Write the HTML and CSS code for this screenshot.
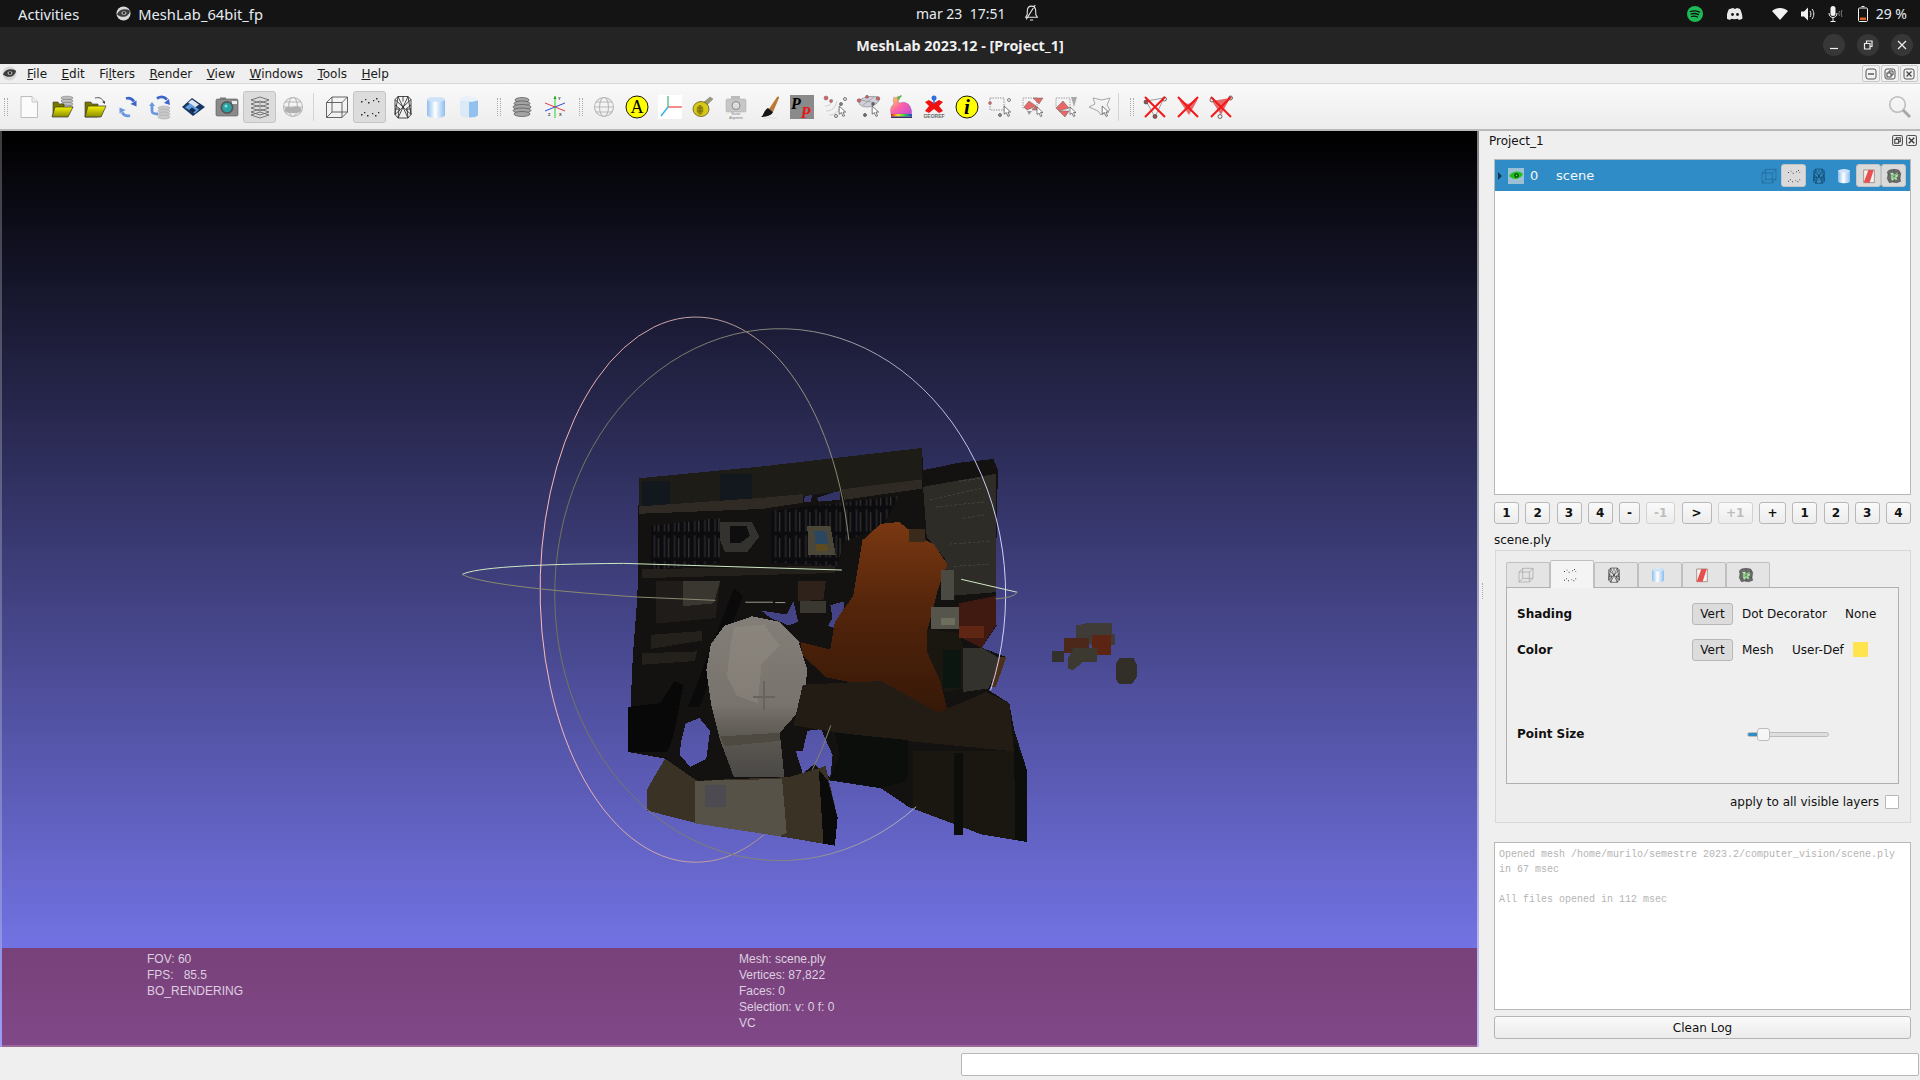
FILE: index.html
```html
<!DOCTYPE html>
<html lang="en">
<head>
<meta charset="utf-8">
<title>MeshLab 2023.12 - [Project_1]</title>
<link rel="stylesheet" href="styles.css">
</head>
<body>
<svg class="defs" aria-hidden="true">
  <defs>
    <linearGradient id="gFolder" x1="0" y1="0" x2="0" y2="1"><stop offset="0" stop-color="#f4f400"/><stop offset="1" stop-color="#8a8a00"/></linearGradient>
    <linearGradient id="gSmooth" x1="0" y1="0" x2="1" y2="0"><stop offset="0" stop-color="#8dbdee"/><stop offset=".45" stop-color="#fff"/><stop offset="1" stop-color="#8dbdee"/></linearGradient>
    <linearGradient id="gBunny" x1="0" y1="0" x2="1" y2="1"><stop offset="0" stop-color="#ffe23a"/><stop offset=".5" stop-color="#ff62a8"/><stop offset="1" stop-color="#c04ad8"/></linearGradient>
    <linearGradient id="gRain" x1="0" y1="0" x2="1" y2="0"><stop offset="0" stop-color="#e0201c"/><stop offset=".33" stop-color="#f0e020"/><stop offset=".66" stop-color="#20d040"/><stop offset="1" stop-color="#2040e0"/></linearGradient>
    <symbol id="i-cube" viewBox="0 0 24 24"><path d="M1.500 7.500h15.500v15h-15.500zM1.500 7.500l5.500-5.500h15.500v15l-5.500 5.500M17 7.500l5.500-5.500M7 2v15h15.500M1.500 22.500l5.500-5.500" fill="none" stroke="currentColor" stroke-width=".9"/></symbol>
    <symbol id="i-points" viewBox="0 0 24 24"><path d="M3 6h1.500v1.500h-1.500zM7 4h1.300v1.300h-1.300zM10 7h1.500v1.500h-1.500zM15 5h1.300v1.300h-1.300zM18 3h1.500v1.500h-1.500zM20 6h1.300v1.300h-1.300zM3 19h1.500v1.500h-1.500zM6 17h1.300v1.300h-1.300zM9 20h1.500v1.500h-1.500zM14 18h1.300v1.300h-1.300zM17 20h1.500v1.500h-1.500zM20 17h1.300v1.300h-1.300z" fill="currentColor"/></symbol>
    <symbol id="i-wire" viewBox="0 0 24 24"><path d="M7 1.500h10l3 3v15l-3 3.500h-10l-3-3.500v-15zM7 1.500l-3 18M17 1.500l3 18M7 1.500l10 21.500M17 1.500l-10 21.500M4 4.500l16 15M20 4.500l-16 15M12 1.500v5M4 10l5 4M20 10l-5 4M7 23l1-9M17 23l-1-9M4 14h5M20 14h-5" fill="none" stroke="currentColor" stroke-width=".85"/></symbol>
    <symbol id="i-smooth" viewBox="0 0 24 24"><path d="M3 5c0-4 18-4 18 0v15c0 4-18 4-18 0z" fill="url(#gSmooth)"/><ellipse cx="12" cy="4.500" rx="9" ry="2.300" fill="#cfe3f8"/></symbol>
    <symbol id="i-flat" viewBox="0 0 24 24"><path d="M3 5c0-3 6-3.500 9-3.500v21c-3 0-9-.5-9-3z" fill="#dce9f7"/><path d="M12 6.500c4 0 9-.7 9-1.500v15c0 1.700-5 2.500-9 2.500z" fill="#93c1ee"/><path d="M12 1.500c4 0 9 1 9 3.500-2 1-5 1.500-9 1.500-3 0-6-.5-9-1.500 0-2.500 5-3.500 9-3.500z" fill="#e9f2fb"/></symbol>
    <symbol id="i-texred" viewBox="0 0 24 24"><path d="M4 3h16v19h-16z" fill="#f4f4f4" stroke="#8a6a5a" stroke-width="1"/><path d="M11 3h8l-6 19h-9z" fill="#e85050"/></symbol>
    <symbol id="i-mesh" viewBox="0 0 24 24"><path d="M5 3l7-1 7 1 3 5-1 8 1 4-6 2-6-1-5 1-3-6 1-6-1-4z" fill="#6c6c6c" stroke="#333" stroke-width=".7"/><path d="M6 8l5-1 2 3 4-3 1 5-2 3 1 3-5-1-2 2-3-3 1-4z" fill="#a6e6a0"/><path d="M3 8l18 9M21 6l-17 12M12 2v20" stroke="#3a3a3a" stroke-width=".5" fill="none"/></symbol>
    <symbol id="i-stack" viewBox="0 0 24 24"><g fill="none" stroke="#6c6c6c" stroke-width=".9"><path d="M3 5l9-3 9 3-9 3z"/><path d="M3 9l9-3 9 3-9 3z"/><path d="M3 13l9-3 9 3-9 3z"/><path d="M3 17l9-3 9 3-9 3z"/><path d="M3 20l9-3 9 3-9 3z"/></g></symbol>
    <symbol id="i-cursor" viewBox="0 0 24 24"><path d="M4 2v15l4-3 3 7 3-1-3-7h5z" fill="#fff" stroke="#444" stroke-width="1.300"/></symbol>
    <symbol id="i-globe" viewBox="0 0 24 24"><g fill="none" stroke="#b8b8b8" stroke-width="1.100"><circle cx="12" cy="12" r="9.500"/><ellipse cx="12" cy="12" rx="4.500" ry="9.500"/><path d="M2.500 12h19M4 7h16M4 17h16"/></g></symbol>
    <symbol id="i-x" viewBox="0 0 24 24"><path d="M2 2l20 20M22 2l-20 20" stroke="#f01818" stroke-width="2" fill="none"/></symbol>
    <symbol id="i-logo" viewBox="0 0 16 16"><circle cx="8" cy="8" r="7.500" fill="#d8d8d8"/><path d="M1 9c2-5 8-7 14-4-1 6-8 9-14 4z" fill="#3c3c3c"/><ellipse cx="8.500" cy="7.500" rx="2.800" ry="2" fill="#a8a8a8"/><circle cx="8.500" cy="7.500" r="1.100" fill="#111"/></symbol>
  </defs>
</svg>

<header class="sysbar">
  <span class="activities">Activities</span>
  <span class="app"><svg class="applogo"><use href="#i-logo"/></svg>MeshLab_64bit_fp</span>
  <span class="clock">mar 23&nbsp; 17:51</span>
  <svg class="bell" viewBox="0 0 16 16"><path d="M8 2c-3 0-4 2-4 5v3l-1.500 2.500h11l-1.500-2.500v-3c0-3-1-5-4-5zM6.500 15h3M3 14.500l8.500-13.500" fill="none" stroke="#e6e6e6" stroke-width="1"/></svg>
  <div class="tray">
    <svg class="t-spot" viewBox="0 0 16 16"><circle cx="8" cy="8" r="8" fill="#1db954"/><path d="M3.500 5.500c3-1 6-.8 9 .7M4 8c2.500-.8 5-.6 7.500.6M4.500 10.500c2-.6 4-.5 6 .5" fill="none" stroke="#111" stroke-width="1.300" stroke-linecap="round"/></svg>
    <svg class="t-disc" viewBox="0 0 16 12"><path d="M3 1c1.500-.7 3-1 3.500-1l.4.800h2.200l.4-.8c.5 0 2 .3 3.500 1 1.500 2.500 2.500 6 2.400 9.500-1.300 1-2.700 1.400-3.600 1.500l-.9-1.300c-2.300.6-4.500.6-6.800 0l-.9 1.300c-.9-.1-2.300-.5-3.600-1.500-.1-3.500.9-7 2.400-9.500z" fill="#e8e8e8"/><circle cx="5.500" cy="6.500" r="1.400" fill="#141414"/><circle cx="10.500" cy="6.500" r="1.400" fill="#141414"/></svg>
    <svg class="t-wifi" viewBox="0 0 16 12"><path d="M0 3c4.500-4 11.500-4 16 0l-8 9z" fill="#f2f2f2"/></svg>
    <svg class="t-vol" viewBox="0 0 16 16"><path d="M1 5.500h3l4-4v13l-4-4h-3z" fill="#f2f2f2"/><path d="M10 5c1.200 1.800 1.200 4.200 0 6M12 3c2.400 3 2.400 7 0 10" fill="none" stroke="#f2f2f2" stroke-width="1"/></svg>
    <svg class="t-mic" viewBox="0 0 16 16"><rect x="3.500" y="0" width="5" height="10" rx="2.500" fill="#f2f2f2"/><path d="M2 7c0 6 8 6 8 0M6 12v3M3.500 15.500h5" fill="none" stroke="#f2f2f2" stroke-width="1"/><path d="M12.500 5c-.8 1.800-.8 3.200 0 5M15 4c-1 2.500-1 4.500 0 7" fill="none" stroke="#9a9a9a" stroke-width=".8"/></svg>
    <svg class="t-bat" viewBox="0 0 10 16"><path d="M3.500.5h3M1.500 2h7c.6 0 1 .4 1 1v11.500c0 .6-.4 1-1 1h-7c-.6 0-1-.4-1-1v-11.500c0-.6.4-1 1-1z" fill="none" stroke="#f2f2f2" stroke-width="1"/><rect x="2" y="11.500" width="6" height="2.500" fill="#e8641e"/></svg>
    <span class="batt">29 %</span>
  </div>
</header>

<div class="titlebar">
  <span class="wintitle">MeshLab 2023.12 - [Project_1]</span>
  <div class="winctl">
    <span class="wbtn"><svg viewBox="0 0 12 12"><path d="M2 9.500h8" stroke="#eee" stroke-width="1.200"/></svg></span>
    <span class="wbtn"><svg viewBox="0 0 12 12"><path d="M2.500 4.500h5.500v5.500h-5.500zM4.500 4.500v-2.500h5.500v5.500h-2" fill="none" stroke="#eee" stroke-width="1.200"/></svg></span>
    <span class="wbtn"><svg viewBox="0 0 12 12"><path d="M2 2l8 8M10 2l-8 8" stroke="#eee" stroke-width="1.200"/></svg></span>
  </div>
</div>

<nav class="menubar">
  <svg class="menulogo"><use href="#i-logo"/></svg>
  <span class="mi"><u>F</u>ile</span>
  <span class="mi"><u>E</u>dit</span>
  <span class="mi">Fi<u>l</u>ters</span>
  <span class="mi"><u>R</u>ender</span>
  <span class="mi"><u>V</u>iew</span>
  <span class="mi"><u>W</u>indows</span>
  <span class="mi"><u>T</u>ools</span>
  <span class="mi"><u>H</u>elp</span>
  <div class="mdi">
    <span class="mdib"><svg viewBox="0 0 12 12"><rect x="1" y="1" width="10" height="10" rx="2" fill="none" stroke="#555"/><path d="M3 6h6" stroke="#444" stroke-width="1.300"/></svg></span>
    <span class="mdib"><svg viewBox="0 0 12 12"><rect x="1" y="1" width="10" height="10" rx="2" fill="none" stroke="#555"/><rect x="3" y="5" width="4" height="4" fill="none" stroke="#444"/><path d="M5 5v-2h4v4h-2" fill="none" stroke="#444"/></svg></span>
    <span class="mdib"><svg viewBox="0 0 12 12"><rect x="1" y="1" width="10" height="10" rx="2" fill="none" stroke="#555"/><path d="M3.500 3.500l5 5M8.500 3.500l-5 5" stroke="#444" stroke-width="1.300"/></svg></span>
  </div>
</nav>

<div class="toolbar">
  <span class="handle h1"></span>
  <div class="tgroup">
    <span class="tb"><svg viewBox="0 0 24 24"><path d="M4 1.500h11l5.500 5.500v15.500h-16.500z" fill="#fbfbfb" stroke="#bdbdbd"/><path d="M15 1.500v5.500h5.500" fill="#eee" stroke="#c8c8c8"/></svg></span>
    <span class="tb"><svg viewBox="0 0 24 24"><g fill="#c0c0c0" stroke="#666" stroke-width=".5"><ellipse cx="17" cy="3" rx="6" ry="1.800"/><ellipse cx="17" cy="6" rx="6" ry="1.800"/><ellipse cx="17" cy="9" rx="6" ry="1.800"/><ellipse cx="17" cy="12" rx="6" ry="1.800"/></g><path d="M3 7h5l1 2h5v12h-11z" fill="#777700" stroke="#333" stroke-width=".6"/><path d="M5 12h18l-5 10h-16z" fill="url(#gFolder)" stroke="#333" stroke-width=".7"/></svg></span>
    <span class="tb"><svg viewBox="0 0 24 24"><path d="M2 7h6l1 2h6v13h-13z" fill="#777700" stroke="#333" stroke-width=".6"/><path d="M5 11h18l-5 11h-16z" fill="url(#gFolder)" stroke="#333" stroke-width=".7"/><path d="M12 3c4-1 7 0 9 4" fill="none" stroke="#444" stroke-width=".9"/><path d="M22 9l-3-2 3-1z" fill="#444"/></svg></span>
    <span class="tb"><svg viewBox="0 0 24 24"><path d="M10 3.500c3-1 6 0 8 3" fill="none" stroke="#3a66cc" stroke-width="2.800"/><path d="M20.500 11.500l-6-2.500 6-3.500z" fill="#3a66cc"/><path d="M14 20.500c-3 1-6 0-8-3" fill="none" stroke="#6a98e0" stroke-width="2.800"/><path d="M3.500 12.500l6 2.500-6 3.500z" fill="#6a98e0"/></svg></span>
    <span class="tb"><svg viewBox="0 0 24 24"><g fill="#cacaca" stroke="#989898" stroke-width=".4"><ellipse cx="15" cy="13" rx="6" ry="2"/><ellipse cx="15" cy="16" rx="6" ry="2"/><ellipse cx="15" cy="19" rx="6" ry="2"/><ellipse cx="15" cy="22" rx="6" ry="2"/></g><path d="M8 3.500c3-2 7-2 10 1" fill="none" stroke="#3a66cc" stroke-width="2.800"/><path d="M21 10l-6-2 5-4z" fill="#3a66cc"/><path d="M3 10v6c0 2 3 3 6 3" fill="none" stroke="#6a98e0" stroke-width="2.800"/><path d="M0 11l6 0-3-4z" fill="#6a98e0"/></svg></span>
    <span class="tb"><svg viewBox="0 0 24 24"><path d="M0 12l10-9 13 9-12 9z" fill="#17365f"/><path d="M10 4.500l7 5-4 3-7-5z" fill="#dbe6f2"/><path d="M3 12.500l5-4 9 6-4 4z" fill="#5f9de0"/><path d="M7 15l3-2.500 4 2.700-3 2.500z" fill="#112a4c"/></svg></span>
    <span class="tb"><svg viewBox="0 0 24 24"><rect x="1" y="4" width="22" height="17" rx="1.500" fill="#8b8b8b" stroke="#555" stroke-width=".6"/><rect x="17" y="6" width="5" height="3" fill="#eee"/><rect x="5" y="2.500" width="6" height="2" fill="#777"/><circle cx="12" cy="12.500" r="6.500" fill="#555"/><circle cx="12" cy="12.500" r="4.800" fill="#2ba3a3"/><circle cx="11" cy="11" r="1.500" fill="#8adcdc"/></svg></span>
    <span class="tb tb-on"><svg><use href="#i-stack"/></svg></span>
    <span class="tb"><svg viewBox="0 0 24 24"><use href="#i-globe" width="24" height="24"/><path d="M4 13c3-2 5 0 8-1s5-1 8 1v3c-4 3-12 3-16 0z" fill="#b0b0b0"/></svg></span>
  </div>
  <span class="tsep s1"></span>
  <div class="tgroup g2">
    <span class="tb ink"><svg><use href="#i-cube"/></svg></span>
    <span class="tb tb-on ink2"><svg><use href="#i-points"/></svg></span>
    <span class="tb ink2"><svg><use href="#i-wire"/></svg></span>
    <span class="tb"><svg><use href="#i-smooth"/></svg></span>
    <span class="tb"><svg><use href="#i-flat"/></svg></span>
  </div>
  <span class="handle h2"></span>
  <div class="tgroup g3">
    <span class="tb"><svg viewBox="0 0 24 24"><g fill="#a4a4a4" stroke="#555" stroke-width=".7"><ellipse cx="12" cy="5" rx="7" ry="2.500"/><ellipse cx="12" cy="8.500" rx="8" ry="2.500"/><ellipse cx="12" cy="12" rx="9" ry="2.500"/><ellipse cx="12" cy="15.500" rx="9" ry="2.500"/><ellipse cx="12" cy="19" rx="8" ry="2.500"/></g></svg></span>
    <span class="tb"><svg viewBox="0 0 24 24"><path d="M12 1v22" stroke="#8de08d" stroke-width="2"/><path d="M12 1l-1.500 3h3z" fill="#20a020"/><path d="M2 16l20-8" stroke="#3050e0" stroke-width="1"/><path d="M2 8l20 8" stroke="#e04040" stroke-width="1"/><text class="axt" x="15" y="5">Y</text><text class="axt" x="5" y="21">Z</text><text class="axt" x="16" y="21">X</text></svg></span>
  </div>
  <span class="handle h3"></span>
  <div class="tgroup g4">
    <span class="tb"><svg><use href="#i-globe"/></svg></span>
    <span class="tb"><svg viewBox="0 0 24 24"><circle cx="12" cy="12" r="11" fill="#ffff00" stroke="#000" stroke-width=".9"/><text class="letter" x="12" y="18">A</text></svg></span>
    <span class="tb"><svg viewBox="0 0 24 24"><rect width="24" height="24" fill="#fff"/><path d="M10 12V1" stroke="#38b878" stroke-width="1.200"/><path d="M10 12h14" stroke="#f08080" stroke-width="1.800"/><path d="M10 12l-7 9" stroke="#38b0e8" stroke-width="1.500"/></svg></span>
    <span class="tb"><svg viewBox="0 0 24 24"><path d="M13 7l6-5 3 2-6 6z" fill="#9a9a78" stroke="#666" stroke-width=".4"/><ellipse cx="10" cy="14" rx="8" ry="7.500" fill="#d8c818" stroke="#4c4a10" stroke-width=".7"/><ellipse cx="9" cy="15" rx="3.500" ry="5" fill="#a8980c"/><path d="M9 10v9M6 13h6M6 16h6" stroke="#4c4a10" stroke-width=".5"/></svg></span>
    <span class="tb"><svg viewBox="0 0 24 24"><rect x="2" y="4" width="20" height="13" rx="1.500" fill="#c6c6c6" stroke="#aaa" stroke-width=".5"/><rect x="7" y="1" width="9" height="3" fill="#bbb"/><circle cx="12" cy="10.500" r="4" fill="#ddd" stroke="#888"/><text class="tiny" x="12" y="20">Raster</text><text class="tiny" x="12" y="23.500">Alignment</text></svg></span>
    <span class="tb"><svg viewBox="0 0 24 24"><path d="M12 14L20 2c1-1 2.500-.5 2 1l-6 14z" fill="#b87838"/><path d="M11 13l5 4c-1 3-6 5-12 5 3-2 3-7 7-9z" fill="#151515"/><path d="M6 23h14" stroke="#ddd" stroke-width="1"/></svg></span>
    <span class="tb"><svg viewBox="0 0 24 24"><rect width="24" height="24" fill="#8a8a8a"/><text class="pp" x="1" y="14">P<tspan class="pp2" dy="9">P</tspan></text></svg></span>
    <span class="tb"><svg viewBox="0 0 24 24"><path d="M6 20c6 0 10-3 12-12M3 16c6 0 9-3 11-10M2 11c4 0 7-2 8-7" fill="none" stroke="#c8c8c8" stroke-width=".9"/><circle cx="3" cy="3" r="2" fill="#e06060" stroke="#666" stroke-width=".5"/><circle cx="8" cy="6" r="1.500" fill="#e06060" stroke="#666" stroke-width=".5"/><circle cx="22" cy="4" r="1.500" fill="#eee" stroke="#555" stroke-width=".8"/><circle cx="13" cy="21" r="1.500" fill="#eee" stroke="#555" stroke-width=".8"/><circle cx="18" cy="9" r="1.500" fill="#888" stroke="#444" stroke-width=".6"/><use href="#i-cursor" x="14" y="10" width="13" height="13"/></svg></span>
    <span class="tb"><svg viewBox="0 0 24 24"><path d="M3 7c0-4 12-7 19-5 3 2 0 7-6 9-5 2-13 1-13-4z" fill="#d0d0dc" stroke="#8a8a8a" stroke-width=".7"/><path d="M5 5l15 3M7 10l11-8" stroke="#777" stroke-width=".5"/><circle cx="3" cy="5.500" r="1.800" fill="#e06060" stroke="#555" stroke-width=".5"/><circle cx="11" cy="1.800" r="1.500" fill="#e06060" stroke="#555" stroke-width=".5"/><circle cx="22" cy="3.500" r="1.800" fill="#e06060" stroke="#555" stroke-width=".5"/><circle cx="9" cy="20" r="1.500" fill="#777" stroke="#333" stroke-width=".6"/><circle cx="17" cy="9" r="1.300" fill="#777" stroke="#333" stroke-width=".6"/><use href="#i-cursor" x="14" y="10" width="13" height="13"/></svg></span>
    <span class="tb"><svg viewBox="0 0 24 24"><path d="M8 2c3-2 3 1 2 3l-1 2c1 0 1 1 2 1 5-2 10 1 11 6 1 2 1 4 0 5h-20c-1-5 0-8 3-10-1-2-1-5 0-7 1 1 2 1 3 0z" fill="url(#gBunny)" stroke="#8a5aa0" stroke-width=".4"/><path d="M8 3l4-3 1 1-4 4z" fill="#40c040"/><rect x="2" y="19" width="21" height="2.500" fill="url(#gRain)"/><rect x="2" y="21.500" width="21" height="1.500" fill="#3a2a6a"/></svg></span>
    <span class="tb"><svg viewBox="0 0 24 24"><path d="M3 7l4-2 5 3 5-3 4 2-4 4 4 5-4 2-5-4-5 4-4-2 4-5z" fill="#f01010"/><circle cx="12" cy="3" r="2.500" fill="#2f6ee0"/><path d="M12 5v4" stroke="#2f6ee0" stroke-width="1.500"/><text class="geo" x="12" y="23">GEOREF</text></svg></span>
    <span class="tb"><svg viewBox="0 0 24 24"><circle cx="12" cy="12" r="11" fill="#ffff00" stroke="#000" stroke-width=".9"/><text class="letter inf" x="12" y="18.500">i</text></svg></span>
    <span class="tb"><svg viewBox="0 0 24 24"><path d="M2 3h14v12h-14z" fill="none" stroke="#999" stroke-width="1" stroke-dasharray="1.500 1"/><circle cx="2" cy="8" r="1.500" fill="#e06060" stroke="#777" stroke-width=".5"/><circle cx="21" cy="5" r="1.500" fill="#eee" stroke="#666" stroke-width=".8"/><circle cx="12" cy="20" r="1.500" fill="#999" stroke="#555" stroke-width=".8"/><use href="#i-cursor" x="14" y="10" width="13" height="13"/></svg></span>
    <span class="tb"><svg viewBox="0 0 24 24"><path d="M2 3h14v10h-14z" fill="none" stroke="#999" stroke-width=".9" stroke-dasharray="1.500 1"/><path d="M12 3h10l-4 6-4-4zM8 6l7 5-9 4-3-3zM15 11l3 4-7 0z" fill="#e86868" stroke="#666" stroke-width=".5"/><path d="M6 16l5 0-3 4z" fill="#9a9a9a"/><use href="#i-cursor" x="14" y="11" width="12" height="12"/></svg></span>
    <span class="tb"><svg viewBox="0 0 24 24"><path d="M2 3h14v10h-14z" fill="none" stroke="#999" stroke-width=".9" stroke-dasharray="1.500 1"/><path d="M17 2h6l-3 10z" fill="#a8a8a8"/><path d="M9 6l6 7-10 3-3-3zM5 16h10l-4 6z" fill="#e86868" stroke="#666" stroke-width=".5"/><use href="#i-cursor" x="14" y="11" width="12" height="12"/></svg></span>
    <span class="tb"><svg viewBox="0 0 24 24"><path d="M6 3l9 2 8-2-3 7 3 5-9 5-3-4-9-4 6-3z" fill="none" stroke="#a8a8a8" stroke-width="1"/><use href="#i-cursor" x="13" y="10" width="13" height="13"/></svg></span>
  </div>
  <span class="tsep s2"></span>
  <span class="handle h4"></span>
  <div class="tgroup g5">
    <span class="tb"><svg viewBox="0 0 24 24"><path d="M3 6l9 16 9-19z" fill="none" stroke="#888" stroke-width=".8"/><circle cx="3" cy="7" r="2" fill="#a05050" stroke="#333" stroke-width=".6"/><circle cx="21.500" cy="4" r="2" fill="#eee" stroke="#333" stroke-width=".7"/><circle cx="12" cy="21.500" r="2" fill="#a05050" stroke="#333" stroke-width=".6"/><use href="#i-x"/></svg></span>
    <span class="tb"><svg viewBox="0 0 24 24"><path d="M3 5l9 4 10-5-9 16z" fill="#e86868"/><use href="#i-x"/></svg></span>
    <span class="tb"><svg viewBox="0 0 24 24"><path d="M3 6l9 14 9-17z" fill="#e86868"/><circle cx="3" cy="5" r="2" fill="#eee" stroke="#333" stroke-width=".7"/><circle cx="21.500" cy="3" r="2" fill="#eee" stroke="#333" stroke-width=".7"/><circle cx="11" cy="21.500" r="2" fill="#eee" stroke="#333" stroke-width=".7"/><use href="#i-x"/></svg></span>
  </div>
  <svg class="search" viewBox="0 0 24 24"><circle cx="9.500" cy="9.500" r="7.800" fill="none" stroke="#bdbdbd" stroke-width="1.600"/><path d="M15 15l7 7" stroke="#a8a8a8" stroke-width="3"/></svg>
</div>

<main class="workspace">
  <section class="viewport">
    <svg class="scene" viewBox="0 0 1568 1568" preserveAspectRatio="none">
      <defs>
        <linearGradient id="gCloak" x1="0" y1="0" x2="0" y2="1"><stop offset="0" stop-color="#7a3812"/><stop offset=".45" stop-color="#54250b"/><stop offset="1" stop-color="#361807"/></linearGradient>
        <linearGradient id="gHead" x1="0" y1="0" x2="0" y2="1"><stop offset="0" stop-color="#837e77"/><stop offset=".55" stop-color="#78736c"/><stop offset=".75" stop-color="#5c5852"/><stop offset="1" stop-color="#4a4846"/></linearGradient>
        <linearGradient id="gRingL" gradientUnits="userSpaceOnUse" x1="218" y1="0" x2="895" y2="0"><stop offset="0" stop-color="#ffb8b8"/><stop offset=".5" stop-color="#bfa0a0"/><stop offset="1" stop-color="#86866e"/></linearGradient>
        <linearGradient id="gRingB" gradientUnits="userSpaceOnUse" x1="250" y1="0" x2="1232" y2="0"><stop offset="0" stop-color="#73735a"/><stop offset=".5" stop-color="#84847a"/><stop offset="1" stop-color="#d0d0ff"/></linearGradient>
        <pattern id="pBooks" width="22" height="70" patternUnits="userSpaceOnUse"><rect width="22" height="70" fill="#0c0c0e"/><rect x="3" y="6" width="4" height="60" fill="#23232a"/><rect x="12" y="14" width="3" height="52" fill="#34322f"/></pattern>
      </defs>
      <g class="mesh">
        <path fill-rule="evenodd" fill="#141210" d="M433 482L700 450 1050 400 1052 460 1130 440 1205 430 1215 460 1210 760 1212 880 1180 940 1232 965 1195 1055 1240 1090 1250 1160 1278 1270 1278 1465 1180 1445 1020 1370 960 1320 845 1298 866 1400 860 1475 740 1450 560 1415 450 1380 452 1320 490 1240 410 1222 415 1100 420 960 430 800Z
        M525 1195L535 1145 565 1130 588 1165 580 1240 545 1262 522 1230Z
        M790 1220L800 1165 830 1160 855 1230 850 1290 815 1255 790 1280 775 1220Z
        M795 530L810 525 808 545 792 545Z M820 535L870 515 872 540 825 545Z
        M700 840L755 850 770 815 780 870 760 880 720 860Z
        M850 825L880 815 875 895 845 880 855 860Z
        M782 925L845 945 825 950 795 940Z"/>
        <path fill="#1e1c16" d="M433 482L700 450 1050 400 1050 490 820 525 700 552 433 560Z"/>
        <path fill="#13181f" d="M440 490h60v68h-60zM610 470h70v75h-70z"/>
        <path fill="#2f2b24" d="M433 558L700 535 790 525 790 548 700 565 433 578Z"/>
        <path fill="#2f2b24" d="M875 512L1050 485 1050 510 880 540Z"/>
        <path fill="url(#pBooks)" d="M460 610L610 590V710L460 730Z"/>
        <path fill="url(#pBooks)" d="M720 570L1000 530 960 620 880 650 865 720 720 710Z"/>
        <path fill="#34322e" d="M610 600h70l15 40-25 40h-50l-10-30z"/>
        <path fill="#0e0e0f" d="M632 610h35l8 28-20 18h-23z"/>
        <path fill="#4a4638" d="M800 610h50l12 80h-60z"/>
        <path fill="#2a4660" d="M815 625h25l6 35h-28z"/>
        <path fill="#5c4a20" d="M818 660h24l4 18h-26z"/>
        <path fill="#24211c" d="M440 728L860 718 860 738 440 752Z"/>
        <path fill="#1f1c19" d="M470 760h140l-10 100-130 15z"/>
        <path fill="#3a3630" d="M530 760h80l-14 60-66 8z"/>
        <path fill="#2e221a" d="M780 760h60l-5 50-55 5z"/>
        <path fill="#3a3830" d="M785 815h55v30h-55z"/>
        <path fill="#24211c" d="M460 905l110-10 0 26-110 22zM440 955l120-5-5 26-115 10z"/>
        <path fill="#0a0a0a" d="M640 780L540 1100 565 1100 660 800z"/>
        <path fill="#2e2c27" d="M1052 505L1210 470 1210 790 1110 800 1100 700 1060 640Z"/>
        <path fill="none" stroke="#46443c" stroke-width="2" stroke-dasharray="6 4" d="M1068 540l110-30M1080 560l110-15M1140 590l50-10M1110 660l90-8M1120 720l80-6M1130 490l50-8"/>
        <path fill="url(#gCloak)" d="M960 605L1000 600 1040 640 1075 660 1105 715 1085 780 1060 900 1080 980 1105 1110 1085 1115 970 1080 920 1040 840 1020 790 960 785 925 850 945 860 870 900 800 920 650Z"/>
        <path fill="#3a2a1c" d="M1022 618h35v35h-35z"/>
        <path fill="#4a4a42" d="M1090 730h30v80h-30z"/><path fill="#56554c" d="M1070 830h60v60h-60z"/><path fill="#6e6e5c" d="M1092 860h30v18h-30z"/>
        <path fill="#1a1610" d="M1060 890l70 10 10 40 0 110-40 10-40-110z"/>
        <path fill="#0c1610" d="M1095 945h40v105h-40z"/>
        <path fill="#401a10" d="M1130 820l80-20 0 80-30 60-50-30z"/>
        <path fill="#602614" d="M1130 880h55v35h-55z"/>
        <path fill="#34322c" d="M1140 940l40 0 40 30-25 80-55 10z"/>
        <path fill="#4c3018" d="M1215 965h18l-22 80h-12z"/>
        <path fill="url(#gHead)" d="M620 880L680 855 740 870 780 920 800 1000 790 1100 740 1170 750 1290 640 1290 610 1190 590 1090 580 1000 590 930Z"/>
        <path fill="#a09a90" d="M640 885l65-8 35 58-40 50-8 105-45-20-22-55 8-85z" opacity=".28"/>
        <path fill="#68635c" d="M703 1030h5v40h22v6h-22v34h-5v-34h-22v-6h22z"/>
        <path fill="#4e4a42" d="M610 1180l130-10 0 22-120 14z"/>
        <path fill="#3a3225" d="M452 1320L490 1240 560 1300 640 1295 760 1290 840 1260 866 1400 860 1475 740 1450 560 1415 450 1380Z"/>
        <path fill="#565248" d="M555 1300L745 1295 755 1440 740 1450 555 1415Z"/>
        <path fill="#47465a" d="M578 1310h45v60h-45z" opacity=".55"/>
        <path fill="#221c14" d="M790 1040L960 1030 1085 1115 1190 1060 1240 1090 1250 1220 1040 1195 870 1170 770 1150Z"/>
        <path fill="#1a1710" d="M1030 1220L1250 1220 1278 1270 1278 1465 1180 1445 1030 1375Z"/>
        <path fill="#0c0e0c" d="M860 1170L1020 1190 1018 1300 960 1320 850 1295 870 1230ZM1120 1225h20v220h-20zM1250 1190l28 80 0 195-25-5z"/>
        <path fill="#0a0a0a" d="M825 1270l20 30 21 100-6 75-25-5z"/>
        <path fill="#080808" d="M410 1100l70-10 30-60 20 10-15 100-10 50-10 32-85 0z"/>
        <path fill="#33312c" d="M1332 950h26v28h-26z"/>
        <path fill="#3f3b36" d="M1385 880l30-8h48v30h8v30h-50l-36-10z"/>
        <path fill="#4c281a" d="M1358 915h55v40h-55z"/>
        <path fill="#5c2412" d="M1420 905h42v55h-42z"/>
        <path fill="#3c3a30" d="M1380 940l50 0 0 38-30 0-20 22-12-2 0-30z"/>
        <path fill="#322f28" d="M1472 985l8-18h30l8 20v30l-10 20h-30l-6-12z"/>
      </g>
      <g class="rings">
        <path stroke="url(#gRingL)" d="M890.400 650A339 737 0 1 0 706 1445"/>
        <path stroke="#84846c" d="M851 1150A339 737 0 0 1 811 1270"/>
        <path stroke="url(#gRingB)" d="M1199 1055A491 719 0 1 0 1037 1370"/>
        <path stroke="#cfe8c4" d="M48 742Q90 715 400 712L875 730"/>
        <path stroke="#cfe8c4" d="M1135 755L1257 790"/>
        <path stroke="#8a8a70" d="M48 742Q100 775 430 803L600 812"/>
        <path stroke="#8a8a70" d="M1257 790Q1250 805 1210 808"/>
        <path stroke="#9a9a88" d="M665 817h60M730 818h22"/>
      </g>
    </svg>
    <div class="overlay">
      <div class="ovcol ov1"><span>FOV: 60</span><span>FPS:&nbsp;&nbsp;&nbsp;85.5</span><span>BO_RENDERING</span></div>
      <div class="ovcol"><span>Mesh: scene.ply</span><span>Vertices: 87,822</span><span>Faces: 0</span><span>Selection: v: 0 f: 0</span><span>VC</span></div>
    </div>
  </section>

  <aside class="dock">
    <span class="splitter"></span>
    <div class="dockhead">
      <span>Project_1</span>
      <span class="dockbtns">
        <svg viewBox="0 0 10 10"><rect x=".5" y=".5" width="9" height="9" rx="1.500" fill="none" stroke="#555"/><rect x="2.500" y="4" width="3.500" height="3.500" fill="none" stroke="#444"/><path d="M4 4v-1.500h3.500v3.500h-1.500" fill="none" stroke="#444"/></svg>
        <svg viewBox="0 0 10 10"><rect x=".5" y=".5" width="9" height="9" rx="1.500" fill="none" stroke="#555"/><path d="M2.500 2.500l5 5M7.500 2.500l-5 5" stroke="#333" stroke-width="1.200"/></svg>
      </span>
    </div>
    <div class="tree">
      <div class="treerow">
        <span class="arrow"></span>
        <span class="eye"><svg viewBox="0 0 16 16"><rect width="16" height="16" fill="#9cc0d4"/><path d="M1 8c3-5 10-6 14-2-2 5-9 7-14 2z" fill="#20c020"/><circle cx="8.500" cy="7.500" r="2.300" fill="#0c3a10"/><circle cx="8.500" cy="7.500" r="1" fill="#50e050"/></svg></span>
        <span class="rownum">0</span>
        <span class="rowname">scene</span>
        <div class="rowicons">
          <span class="ri ink3"><svg><use href="#i-cube"/></svg></span>
          <span class="ri ri-on ink4"><svg><use href="#i-points"/></svg></span>
          <span class="ri ink5"><svg><use href="#i-wire"/></svg></span>
          <span class="ri"><svg><use href="#i-smooth"/></svg></span>
          <span class="ri ri-on"><svg><use href="#i-texred"/></svg></span>
          <span class="ri ri-on"><svg><use href="#i-mesh"/></svg></span>
        </div>
      </div>
    </div>
    <div class="btnrow">
      <span class="qb w25">1</span><span class="qb w25">2</span><span class="qb w25">3</span><span class="qb w25">4</span>
      <span class="qb w21">-</span><span class="qb w29 off">-1</span><span class="qb w30">&gt;</span><span class="qb w35 off">+1</span><span class="qb w27">+</span>
      <span class="qb w25">1</span><span class="qb w25">2</span><span class="qb w25">3</span><span class="qb w25">4</span>
    </div>
    <div class="meshname">scene.ply</div>
    <div class="group">
      <div class="tabs">
        <span class="tab ink6"><svg><use href="#i-cube"/></svg></span>
        <span class="tab tab-on ink4"><svg><use href="#i-points"/></svg></span>
        <span class="tab ink2"><svg><use href="#i-wire"/></svg></span>
        <span class="tab"><svg><use href="#i-smooth"/></svg></span>
        <span class="tab"><svg><use href="#i-texred"/></svg></span>
        <span class="tab"><svg><use href="#i-mesh"/></svg></span>
      </div>
      <div class="pane">
        <div class="prow">
          <span class="plabel">Shading</span>
          <span class="toggle">Vert</span>
          <span class="opt o-dot">Dot Decorator</span>
          <span class="opt o-none">None</span>
        </div>
        <div class="prow">
          <span class="plabel">Color</span>
          <span class="toggle">Vert</span>
          <span class="opt o-mesh">Mesh</span>
          <span class="opt o-user">User-Def</span>
          <span class="swatch"></span>
        </div>
        <div class="prow prow-size">
          <span class="plabel">Point Size</span>
          <span class="slider"><span class="fill"></span><span class="knob"></span></span>
        </div>
      </div>
      <div class="applyrow"><span>apply to all visible layers</span><span class="check"></span></div>
    </div>
    <div class="log">
      <p>Opened mesh /home/murilo/semestre 2023.2/computer_vision/scene.ply</p>
      <p>in 67 msec</p>
      <p>&nbsp;</p>
      <p>All files opened in 112 msec</p>
    </div>
    <div class="clean">Clean Log</div>
  </aside>
</main>

<footer class="statusbar"><span class="cmdinput"></span></footer>
</body>
</html>
```

FILE: styles.css
```css
* { box-sizing: border-box; }
html, body { margin: 0; padding: 0; }
body {
  width: 1920px; height: 1080px; overflow: hidden;
  display: flex; flex-direction: column;
  background: #efefef; color: #111;
  font-family: "DejaVu Sans", sans-serif; font-size: 12px;
}
.defs { position: absolute; width: 0; height: 0; }
svg { display: block; }

/* system bar */
.sysbar {
  height: 27px; flex: none; display: flex; align-items: center; position: relative;
  background: #141414; color: #e4ecf2;
  font-family: "Noto Sans", sans-serif; font-size: 14px;
}
.activities { margin-left: 18px; font-size: 14.7px; }
.app { display: flex; align-items: center; margin-left: 37px; font-size: 14.7px; }
.applogo { width: 15px; height: 15px; margin-right: 7px; }
.clock { position: absolute; left: 916px; }
.bell { position: absolute; left: 1023px; top: 4px; width: 17px; height: 17px; }
.tray { margin-left: auto; display: flex; align-items: center; padding-right: 13px; }
.t-spot { width: 16px; height: 16px; margin-right: 24px; }
.t-disc { width: 16px; height: 12px; margin-right: 29px; }
.t-wifi { width: 16px; height: 12px; margin-right: 12px; }
.t-vol { width: 16px; height: 16px; margin-right: 11px; }
.t-mic { width: 16px; height: 16px; margin-right: 15px; }
.t-bat { width: 10px; height: 16px; margin-right: 8px; }

/* title bar */
.titlebar {
  height: 37px; flex: none; display: flex; align-items: center; justify-content: center; position: relative;
  background: #242424; color: #f0f0f0;
}
.wintitle { font-family: "Noto Sans", sans-serif; font-weight: 700; font-size: 14.35px; }
.winctl { position: absolute; right: 7px; top: 7px; display: flex; gap: 12px; }
.wbtn { width: 22px; height: 22px; border-radius: 50%; background: #373737; display: flex; align-items: center; justify-content: center; }
.wbtn svg { width: 12px; height: 12px; }

/* menu */
.menubar {
  height: 20px; flex: none; display: flex; align-items: center;
  background: #efefef; border-bottom: 1px solid #d6d6d6;
}
.menulogo { width: 15px; height: 15px; margin-left: 2px; margin-right: 10px; }
.mi { margin-right: 14.4px; line-height: 19px; padding-top: 1px; color: #1a1a1a; }
.mdi { margin-left: auto; margin-right: 2px; display: flex; gap: 1px; }
.mdib { width: 18px; height: 17px; display: flex; align-items: center; justify-content: center; border: 1px solid #c8c8c8; border-radius: 2px; background: #f2f2f2; }
.mdib svg { width: 12px; height: 12px; }

/* toolbar */
.toolbar {
  height: 47px; flex: none; display: flex; align-items: center; padding-top: 1px;
  background: linear-gradient(#f9f9f9, #ededed);
  border-bottom: 2px solid #b9b9b9;
}
.tgroup { display: flex; align-items: center; }
.tb { width: 33px; height: 32px; display: flex; align-items: center; justify-content: center; flex: none; }
.tb svg { width: 24px; height: 24px; overflow: visible; }
.tb-on { background: #dcdcdc; border: 1px solid #c4c4c4; border-radius: 3px; }
.handle { width: 4px; height: 18px; flex: none; border-left: 1px dotted #aaa; border-right: 1px dotted #aaa; }
.h1 { margin-left: 4px; margin-right: 4px; }
.h2 { margin-left: 12px; margin-right: 4px; }
.h3 { margin-left: 8px; margin-right: 4px; }
.h4 { margin-left: 11px; margin-right: 4px; }
.tsep { width: 1px; height: 28px; background: #d4d4d4; flex: none; }
.s1 { margin-left: 4px; margin-right: 6px; }
.s2 { margin-left: 3px; }
.ink { color: #555; }
.ink2 { color: #2a2a2a; }
.ink3 { color: #1c5f8c; }
.ink4 { color: #444; }
.ink5 { color: #0f3a58; }
.ink6 { color: #9a9a9a; }
.axt { font: 700 4px "Liberation Sans", sans-serif; fill: #333; }
.letter { font: 400 18px "Liberation Serif", serif; text-anchor: middle; fill: #000; }
.inf { font-weight: 700; font-style: italic; font-size: 21px; }
.tiny { font: 3px "Liberation Sans", sans-serif; text-anchor: middle; fill: #777; }
.geo { font: 700 5px "Liberation Sans", sans-serif; text-anchor: middle; fill: #666; }
.pp { font: italic 700 16px "Liberation Serif", serif; fill: #000; }
.pp2 { fill: #e81818; }
.search { width: 24px; height: 24px; margin-left: auto; margin-right: 8px; }

/* workspace */
.workspace { flex: 1; min-height: 0; display: flex; }
.viewport {
  width: 1479px; flex: none; position: relative; display: flex; flex-direction: column; justify-content: flex-end;
  background: linear-gradient(#000, #8080ff);
  border-left: 2px solid rgba(240,240,240,.25);
  border-right: 2px solid rgba(240,240,240,.55);
  background-clip: border-box;
}
.scene { position: absolute; left: 438px; top: 169px; width: 720px; height: 580px; }
.mesh path { shape-rendering: crispEdges; }
.rings path { fill: none; stroke-width: 1; vector-effect: non-scaling-stroke; }
.overlay {
  height: 99px; background: rgba(128,16,16,.5); position: relative;
  border-bottom: 2px solid rgba(240,200,200,.25);
  display: flex; padding: 3px 0 0 145px;
  font-family: "Liberation Sans", sans-serif; font-size: 12px; line-height: 16px; color: #dccfe0;
}
.ovcol { display: flex; flex-direction: column; }
.ov1 { width: 592px; }

/* dock */
.dock { flex: 1; display: flex; flex-direction: column; position: relative; padding: 0 9px 0 15px; }
.splitter { position: absolute; left: 3px; top: 452px; height: 16px; border-left: 1px dotted #aaa; }
.dockhead { height: 28px; padding-top: 3px; margin-left: -5px; margin-right: -6px; display: flex; justify-content: space-between; align-items: flex-start; line-height: 15px; }
.dockbtns { display: flex; gap: 3px; margin-top: 1px; }
.dockbtns svg { width: 11px; height: 11px; }
.tree { height: 336px; flex: none; background: #fff; border: 1px solid #b8b8b8; }
.treerow { height: 31px; background: #308cc6; color: #f4f8fb; display: flex; align-items: center; font-size: 13px; }
.arrow { width: 0; height: 0; border-left: 4px solid #123a58; border-top: 4px solid transparent; border-bottom: 4px solid transparent; margin-left: 3px; }
.eye { margin-left: 6px; width: 16px; height: 16px; }
.rownum { margin-left: 6px; width: 26px; }
.rowname { flex: 1; }
.rowicons { display: flex; align-items: center; padding-right: 4px; }
.ri { width: 25px; height: 23px; display: flex; align-items: center; justify-content: center; border-radius: 3px; }
.ri svg { width: 16px; height: 16px; }
.ri-on { background: #dadada; border: 1px solid #c4c4c4; }
.btnrow { margin-top: 7px; height: 22px; flex: none; display: flex; justify-content: space-between; }
.qb { height: 22px; display: flex; align-items: center; justify-content: center; font-weight: 700; font-size: 12px; border: 1px solid #b8b8b8; border-radius: 3px; background: linear-gradient(#fafafa, #ececec); }
.off { color: #bdbdbd; border-color: #d2d2d2; }
.w25 { width: 25px; } .w21 { width: 21px; } .w29 { width: 29px; } .w30 { width: 30px; } .w35 { width: 35px; } .w27 { width: 27px; }
.meshname { height: 26px; flex: none; line-height: 16px; padding-top: 8px; }
.group { height: 273px; flex: none; margin-left: 1px; border: 1px solid #d8d8d8; padding: 10px 11px 0 10px; background: #ededed; }
.tabs { display: flex; align-items: flex-end; height: 26px; position: relative; }
.tab { width: 44px; height: 25px; display: flex; align-items: center; justify-content: center; padding-right: 5px; background: #e4e4e4; border: 1px solid #c0c0c0; border-bottom: none; border-radius: 2px 2px 0 0; }
.tab svg { width: 16px; height: 16px; }
.tab-on { height: 28px; background: #f4f4f4; position: relative; margin-bottom: -1px; z-index: 1; }
.pane { height: 197px; border: 1px solid #b0b0b0; background: #efefef; padding: 15px 0 0 10px; }
.prow { display: flex; align-items: center; height: 22px; margin-bottom: 14px; }
.prow-size { margin-top: 62px; margin-bottom: 0; }
.plabel { width: 175px; font-weight: 700; flex: none; }
.toggle { width: 41px; height: 22px; flex: none; display: flex; align-items: center; justify-content: center; background: #dcdcdc; border: 1px solid #b8b8b8; border-radius: 3px; }
.opt { flex: none; }
.o-dot { margin-left: 9px; width: 103px; }
.o-mesh { margin-left: 9px; width: 50px; }
.o-user { width: 61px; }
.swatch { width: 15px; height: 15px; background: #ffe44d; margin-top: -2px; flex: none; }
.slider { position: relative; display: block; width: 82px; height: 5px; margin-left: 55px; border: 1px solid #bcbcbc; border-radius: 3px; background: #dedede; }
.fill { position: absolute; left: 0; top: 0; bottom: 0; width: 11px; background: #308cc6; border-radius: 2px; }
.knob { position: absolute; left: 9px; top: -5px; width: 13px; height: 13px; background: #f6f6f6; border: 1px solid #bcbcbc; border-radius: 3px; }
.applyrow { display: flex; justify-content: flex-end; align-items: center; margin-top: 10px; gap: 6px; height: 14px; padding-top: 1px; }
.check { width: 14px; height: 14px; flex: none; background: #fff; border: 1px solid #b8b8b8; border-radius: 1px; }
.log { height: 168px; flex: none; margin-top: 19px; background: #fff; border: 1px solid #b8b8b8; padding: 4px 4px 0 4px; font-family: "Liberation Mono", monospace; font-size: 10px; line-height: 15px; color: #b4b4b4; }
.log p { margin: 0; white-space: pre; }
.clean { height: 23px; flex: none; margin-top: 6px; display: flex; align-items: center; justify-content: center; border: 1px solid #b4b4b4; border-radius: 3px; background: linear-gradient(#fafafa, #ebebeb); }

/* status */
.statusbar { height: 33px; flex: none; display: flex; justify-content: flex-end; padding: 6px 1px 4px 0; background: #efefef; }
.cmdinput { width: 958px; background: #fff; border: 1px solid #b8b8b8; border-radius: 2px; }
```
